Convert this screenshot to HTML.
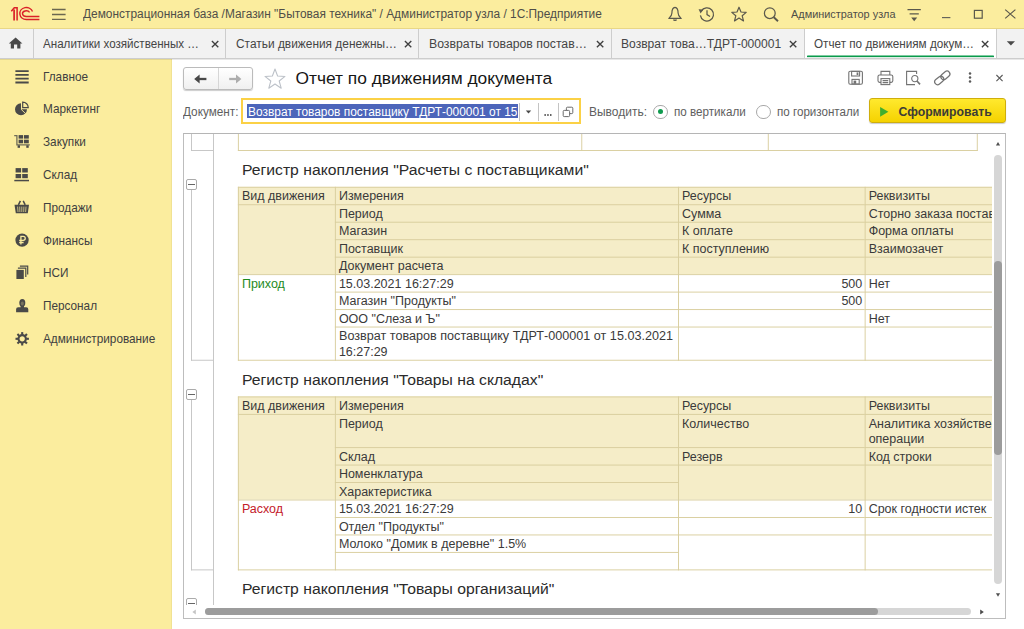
<!DOCTYPE html>
<html lang="ru"><head><meta charset="utf-8"><title>Отчет по движениям документа</title>
<style>
html,body{margin:0;padding:0;}
body{width:1024px;height:629px;overflow:hidden;position:relative;background:#fff;font-family:"Liberation Sans", sans-serif;}
.b{position:absolute;display:block;}
.t{position:absolute;white-space:pre;display:block;transform-origin:0 0;}
#clip{position:absolute;left:184px;top:134px;width:808px;height:471px;overflow:hidden;}
</style></head><body>
<header id="titlebar">
<div class="b" style="left:0px;top:0px;width:1024px;height:29px;background:#FBED9E;"></div>
<div class="b" style="left:0px;top:28px;width:1024px;height:1px;background:#E9D786;"></div>
<svg class="b" style="left:9px;top:5px" width="34" height="18" viewBox="0 0 34 18"><g fill="none" stroke="#DA2128" stroke-linecap="butt" stroke-linejoin="miter">
<path d="M2.3 6.3 L5.3 2.8 H8.1 V15.5" stroke-width="1.5"/><path d="M5.1 4.6 V15.5" stroke-width="1.7"/>
<path d="M23.5 6.6 A6.5 6.0 0 1 0 17.3 14.5 L30.4 14.5" stroke-width="1.4"/>
<path d="M20.6 7.3 A3.8 2.85 0 1 0 17.3 11.55 L30.4 11.55" stroke-width="1.4"/>
</g></svg>
<svg class="b" style="left:51px;top:7px" width="16" height="14" viewBox="0 0 16 14"><g stroke="#6b674f" stroke-width="1.3"><path d="M1 2.5H14.6M1 7.5H14.6M1 12.3H14.6"/></g></svg>
<svg class="b" style="left:666px;top:5px" width="18" height="18" viewBox="0 0 18 18"><g fill="none" stroke="#5a584c" stroke-width="1.2" stroke-linejoin="round"><path d="M9 2.4 C6.6 2.8 5.9 5.4 5.9 8 C5.9 11 4.2 12.2 2.8 13.4 H15.2 C13.8 12.2 12.1 11 12.1 8 C12.1 5.4 11.4 2.8 9 2.4Z"/></g><path d="M7 14.4 H11 A2 1.6 0 0 1 7 14.4Z" fill="#5a584c"/></svg>
<svg class="b" style="left:697px;top:5px" width="19" height="18" viewBox="0 0 19 18"><g fill="none" stroke="#5a584c" stroke-width="1.25"><path d="M4.2 6.2 A6.6 6.6 0 1 1 3.4 10.4"/><path d="M10 5.2 V9.6 L13 11.6"/></g><path d="M1.6 4.2 L6.4 4.6 L3.6 8.6Z" fill="#5a584c"/></svg>
<svg class="b" style="left:730px;top:5px" width="18" height="18" viewBox="0 0 18 18"><path d="M9 2.2 L11 7 L16.2 7.4 L12.2 10.8 L13.5 15.9 L9 13.1 L4.5 15.9 L5.8 10.8 L1.8 7.4 L7 7Z" fill="none" stroke="#5a584c" stroke-width="1.2" stroke-linejoin="round"/></svg>
<svg class="b" style="left:762px;top:5px" width="18" height="18" viewBox="0 0 18 18"><g fill="none" stroke="#5a584c"><circle cx="7.8" cy="8.2" r="5.4" stroke-width="1.25"/><path d="M11.8 12.2 L16 16.2" stroke-width="1.9"/></g></svg>
<svg class="b" style="left:906px;top:7px" width="16" height="16" viewBox="0 0 16 16"><g stroke="#5a584c" stroke-width="1.2" fill="none"><path d="M1.5 2.6H14.8M3.6 6.8H12.8"/></g><path d="M5.2 10.6 H11.2 L8.2 14.2Z" fill="#5a584c"/></svg>
<svg class="b" style="left:940px;top:8px" width="14" height="14" viewBox="0 0 14 14"><path d="M2 9.6H10.4" stroke="#66645a" stroke-width="1.15"/></svg>
<svg class="b" style="left:972px;top:8px" width="14" height="14" viewBox="0 0 14 14"><rect x="2.4" y="2.4" width="7.8" height="7.8" fill="none" stroke="#5a584c" stroke-width="1.2"/></svg>
<svg class="b" style="left:1003px;top:7px" width="16" height="16" viewBox="0 0 16 16"><path d="M2.2 2.6 L12.4 11.4 M12.4 2.6 L2.2 11.4" stroke="#5a584c" stroke-width="1.2"/></svg>
<span class="t" style="left:83.00px;top:5.74px;font-size:12.30px;line-height:16px;color:#4f4e48;transform:scaleX(0.9672);">Демонстрационная база /Магазин "Бытовая техника" / Администратор узла / 1С:Предприятие</span>
<span class="t" style="left:790.50px;top:6.48px;font-size:11.60px;line-height:15px;color:#4f4e48;transform:scaleX(0.9404);">Администратор узла</span>
</header>
<nav id="tabs">
<div class="b" style="left:0px;top:29px;width:1024px;height:30px;background:#F2F2F2;"></div>
<div class="b" style="left:805px;top:29px;width:191px;height:30px;background:#FFFFFF;"></div>
<div class="b" style="left:0px;top:58px;width:1024px;height:1px;background:#CDCDCD;"></div>
<div class="b" style="left:33px;top:29px;width:1px;height:30px;background:#CDCDCD;"></div>
<div class="b" style="left:225px;top:29px;width:1px;height:30px;background:#CDCDCD;"></div>
<div class="b" style="left:418px;top:29px;width:1px;height:30px;background:#CDCDCD;"></div>
<div class="b" style="left:611px;top:29px;width:1px;height:30px;background:#CDCDCD;"></div>
<div class="b" style="left:804px;top:29px;width:1px;height:30px;background:#CDCDCD;"></div>
<div class="b" style="left:996px;top:29px;width:1px;height:30px;background:#CDCDCD;"></div>
<div class="b" style="left:807px;top:55px;width:187px;height:1px;background:#7FCBA1;border-radius:1px 1px 0 0;"></div>
<div class="b" style="left:807px;top:56px;width:187px;height:1px;background:#0A9A4C;"></div>
<div class="b" style="left:807px;top:57px;width:187px;height:1px;background:#DDEFE5;"></div>
<svg class="b" style="left:8px;top:36px" width="16" height="14" viewBox="0 0 16 14"><path d="M7.6 1.4 L14.4 7.4 H12.4 V12.4 H9.2 V8.6 H6 V12.4 H2.8 V7.4 H0.8Z" fill="#4a4a4a"/></svg>
<svg class="b" style="left:210px;top:38.5px" width="10" height="10" viewBox="0 0 10 10"><path d="M1.9 1.9 L8.3 8.3 M8.3 1.9 L1.9 8.3" stroke="#404040" stroke-width="1.35"/></svg>
<svg class="b" style="left:403px;top:38.5px" width="10" height="10" viewBox="0 0 10 10"><path d="M1.9 1.9 L8.3 8.3 M8.3 1.9 L1.9 8.3" stroke="#404040" stroke-width="1.35"/></svg>
<svg class="b" style="left:595px;top:38.5px" width="10" height="10" viewBox="0 0 10 10"><path d="M1.9 1.9 L8.3 8.3 M8.3 1.9 L1.9 8.3" stroke="#404040" stroke-width="1.35"/></svg>
<svg class="b" style="left:788px;top:38.5px" width="10" height="10" viewBox="0 0 10 10"><path d="M1.9 1.9 L8.3 8.3 M8.3 1.9 L1.9 8.3" stroke="#404040" stroke-width="1.35"/></svg>
<svg class="b" style="left:980px;top:38.5px" width="10" height="10" viewBox="0 0 10 10"><path d="M1.9 1.9 L8.3 8.3 M8.3 1.9 L1.9 8.3" stroke="#404040" stroke-width="1.35"/></svg>
<svg class="b" style="left:1005px;top:40px" width="12" height="8" viewBox="0 0 12 8"><path d="M1.8 1.2 H10 L5.9 5.6Z" fill="#4a4a4a"/></svg>
<span class="t" style="left:43.00px;top:35.74px;font-size:12.30px;line-height:16px;color:#454545;transform:scaleX(0.9440);">Аналитики хозяйственных …</span>
<span class="t" style="left:236.00px;top:35.74px;font-size:12.30px;line-height:16px;color:#454545;transform:scaleX(0.9679);">Статьи движения денежны…</span>
<span class="t" style="left:429.00px;top:35.74px;font-size:12.30px;line-height:16px;color:#454545;transform:scaleX(0.9974);">Возвраты товаров постав…</span>
<span class="t" style="left:620.75px;top:35.74px;font-size:12.30px;line-height:16px;color:#454545;transform:scaleX(0.9822);">Возврат това…ТДРТ-000001</span>
<span class="t" style="left:813.75px;top:35.74px;font-size:12.30px;line-height:16px;color:#454545;transform:scaleX(0.9515);">Отчет по движениям докум…</span>
</nav>
<aside id="sections">
<div class="b" style="left:0px;top:59px;width:172px;height:570px;background:#FBED9E;"></div>
<div class="b" style="left:171px;top:59px;width:1px;height:570px;background:#F1E293;"></div>
<svg class="b" style="left:14px;top:67.5px" width="18" height="18" viewBox="0 0 18 18"><g stroke="#4a4a48" stroke-width="1.8"><path d="M1.4 3.1H14.7M1.4 6.85H14.7M1.4 10.6H14.7M1.4 14.5H14.7"/></g></svg>
<svg class="b" style="left:14px;top:100.28px" width="18" height="18" viewBox="0 0 18 18"><path d="M7 9.2 V3.2 A6 6 0 1 0 13 9.2Z" fill="#4a4a48"/><path d="M7 9.2 L11.6 13.6" stroke="#FBED9E" stroke-width="0.9"/><path d="M8.7 7.7 V2.1 A5.6 5.6 0 0 1 14.3 7.7Z" fill="none" stroke="#4a4a48" stroke-width="1.2"/></svg>
<svg class="b" style="left:14px;top:133.06px" width="18" height="18" viewBox="0 0 18 18"><path d="M0.2 2.6 H2.9 V11.8 H15.8" fill="none" stroke="#6f6c58" stroke-width="1.3"/><g fill="#4a4a48"><rect x="4.6" y="2.1" width="4.5" height="3.5"/><rect x="10" y="2.1" width="4.8" height="3.5"/><rect x="4.6" y="6.7" width="4.5" height="3.6"/><rect x="10" y="6.7" width="4.8" height="3.6"/><rect x="3.6" y="12.3" width="2.4" height="2.5"/><rect x="12.3" y="12.3" width="2.4" height="2.5"/></g></svg>
<svg class="b" style="left:14px;top:165.84px" width="18" height="18" viewBox="0 0 18 18"><g fill="#4a4a48"><rect x="1.6" y="2.1" width="5.5" height="4.4"/><rect x="8.2" y="2.1" width="5.6" height="4.4"/><rect x="1.6" y="8" width="5.5" height="4.2"/><rect x="8.2" y="8" width="5.6" height="4.2"/><rect x="0.3" y="13.8" width="14.7" height="1.5"/></g></svg>
<svg class="b" style="left:14px;top:198.62px" width="18" height="18" viewBox="0 0 18 18"><path d="M0.5 5.7 H15 L13.8 14.3 H1.8Z" fill="#4a4a48"/><path d="M4.4 5.9 L6.4 1.9 M9.2 1.9 L11.2 5.9" fill="none" stroke="#4a4a48" stroke-width="1.5"/><g stroke="#FBED9E" stroke-width="0.8" opacity="0.85"><path d="M3.6 7.6 L4 13 M5.7 7.6 L5.9 13 M7.8 7.6 V13 M9.9 7.6 L9.7 13 M12 7.6 L11.6 13"/></g></svg>
<svg class="b" style="left:14px;top:231.4px" width="18" height="18" viewBox="0 0 18 18"><circle cx="8.05" cy="9.1" r="6.65" fill="#4a4a48"/><g fill="none" stroke="#FBED9E" stroke-width="1.3"><path d="M6.9 13.4 V5.3 H9.2 A2.05 2.05 0 0 1 9.2 9.4 H5.2 M5.2 11.5 H9.6"/></g></svg>
<svg class="b" style="left:14px;top:264.18px" width="18" height="18" viewBox="0 0 18 18"><rect x="2.4" y="5.9" width="7.4" height="9.1" fill="#4a4a48"/><g fill="none" stroke="#4a4a48" stroke-width="1.2"><path d="M3.9 4.2 H11.8 V13"/><path d="M5.9 2.2 H13.7 V10.6"/></g></svg>
<svg class="b" style="left:14px;top:296.96px" width="18" height="18" viewBox="0 0 18 18"><g fill="#4a4a48"><ellipse cx="8.3" cy="5.8" rx="3" ry="3.9"/><path d="M6.6 8.6 H10 V10.2 H12.2 A2.1 2.1 0 0 1 14.3 12.3 V15.2 H2.1 V12.3 A2.1 2.1 0 0 1 4.2 10.2 H6.6Z"/></g><ellipse cx="8.3" cy="6.6" rx="1.5" ry="2" fill="#77745f"/></svg>
<svg class="b" style="left:14px;top:329.74px" width="18" height="18" viewBox="0 0 18 18"><g transform="translate(8.2 8.8)"><circle r="3.7" fill="none" stroke="#4a4a48" stroke-width="2.1"/><rect x="-1.05" y="-6.7" width="2.1" height="2.6" fill="#4a4a48" transform="rotate(0)"/><rect x="-1.05" y="-6.7" width="2.1" height="2.6" fill="#4a4a48" transform="rotate(45)"/><rect x="-1.05" y="-6.7" width="2.1" height="2.6" fill="#4a4a48" transform="rotate(90)"/><rect x="-1.05" y="-6.7" width="2.1" height="2.6" fill="#4a4a48" transform="rotate(135)"/><rect x="-1.05" y="-6.7" width="2.1" height="2.6" fill="#4a4a48" transform="rotate(180)"/><rect x="-1.05" y="-6.7" width="2.1" height="2.6" fill="#4a4a48" transform="rotate(225)"/><rect x="-1.05" y="-6.7" width="2.1" height="2.6" fill="#4a4a48" transform="rotate(270)"/><rect x="-1.05" y="-6.7" width="2.1" height="2.6" fill="#4a4a48" transform="rotate(315)"/></g></svg>
<span class="t" style="left:42.50px;top:68.70px;font-size:12.40px;line-height:16px;color:#404040;transform:scaleX(0.9500);">Главное</span>
<span class="t" style="left:42.50px;top:101.48px;font-size:12.40px;line-height:16px;color:#404040;transform:scaleX(0.9500);">Маркетинг</span>
<span class="t" style="left:42.50px;top:134.26px;font-size:12.40px;line-height:16px;color:#404040;transform:scaleX(0.9500);">Закупки</span>
<span class="t" style="left:42.50px;top:167.04px;font-size:12.40px;line-height:16px;color:#404040;transform:scaleX(0.9500);">Склад</span>
<span class="t" style="left:42.50px;top:199.82px;font-size:12.40px;line-height:16px;color:#404040;transform:scaleX(0.9500);">Продажи</span>
<span class="t" style="left:42.50px;top:232.60px;font-size:12.40px;line-height:16px;color:#404040;transform:scaleX(0.9500);">Финансы</span>
<span class="t" style="left:42.50px;top:265.38px;font-size:12.40px;line-height:16px;color:#404040;transform:scaleX(0.9500);">НСИ</span>
<span class="t" style="left:42.50px;top:298.16px;font-size:12.40px;line-height:16px;color:#404040;transform:scaleX(0.9500);">Персонал</span>
<span class="t" style="left:42.50px;top:330.94px;font-size:12.40px;line-height:16px;color:#404040;transform:scaleX(0.9500);">Администрирование</span>
</aside>
<main id="form">
<section id="form-header">
<div class="b" style="left:172px;top:59px;width:852px;height:570px;background:#FFFFFF;"></div>
<div class="b" style="left:0px;top:59px;width:1024px;height:1px;background:rgba(0,0,0,0.09);"></div>
<div class="b" style="left:183px;top:67px;width:70px;height:23px;border:1px solid #BBBBBB;border-radius:3px;background:linear-gradient(#FFFFFF,#F0F0F0);box-sizing:border-box;box-shadow:0 1px 1px rgba(0,0,0,.2)"></div>
<div class="b" style="left:218px;top:68px;width:1px;height:21px;background:#D6D6D6;"></div>
<svg class="b" style="left:193px;top:72.6px" width="16" height="12" viewBox="0 0 16 12"><path d="M3 6 H13.4" stroke="#484848" stroke-width="2.3"/><path d="M1.2 6 L6.6 1.4 V10.6Z" fill="#484848"/></svg>
<svg class="b" style="left:227px;top:72.6px" width="16" height="12" viewBox="0 0 16 12"><path d="M2.2 6 H12.6" stroke="#ADADAD" stroke-width="2.3"/><path d="M14.4 6 L9 1.4 V10.6Z" fill="#ADADAD"/></svg>
<svg class="b" style="left:263px;top:67px" width="24" height="24" viewBox="0 0 24 24"><path d="M12 2 L14.6 9 L22 9.4 L16.2 14 L18.2 21.2 L12 17 L5.8 21.2 L7.8 14 L2 9.4 L9.4 9Z" fill="none" stroke="#BCC1C8" stroke-width="1.05" stroke-linejoin="round"/></svg>
<svg class="b" style="left:847px;top:69px" width="18" height="18" viewBox="0 0 18 18"><g fill="none" stroke="#737373" stroke-width="1.1"><rect x="1.8" y="2.2" width="13.6" height="13" rx="1.4"/><rect x="4.6" y="2.4" width="8" height="4.6"/><rect x="5" y="10.4" width="7.2" height="4.6"/></g><rect x="9.6" y="3.4" width="1.8" height="2.6" fill="#737373"/><rect x="6.6" y="11.6" width="2.6" height="3.2" fill="#737373"/></svg>
<svg class="b" style="left:876px;top:69px" width="19" height="18" viewBox="0 0 19 18"><g fill="none" stroke="#737373" stroke-width="1.1"><path d="M5 6 V2.4 H13.8 V6"/><rect x="2" y="6" width="14.8" height="7.4" rx="1.6"/><rect x="5" y="9.6" width="8.8" height="6" fill="#fff"/><path d="M6.6 11.6H12.2M6.6 13.6H12.2"/></g></svg>
<svg class="b" style="left:905px;top:69px" width="17" height="18" viewBox="0 0 17 18"><g fill="none" stroke="#737373" stroke-width="1.1"><path d="M10 15.6 H1.6 V2.4 H11.6 V5"/><circle cx="9.8" cy="9.6" r="3.1"/><path d="M12 12 L15 15.4" stroke-width="1.6"/></g></svg>
<svg class="b" style="left:933px;top:69px" width="19" height="18" viewBox="0 0 19 18"><g transform="translate(9.3 8.9) rotate(-40)" fill="none" stroke="#737373" stroke-width="1.25"><rect x="-9" y="-2.9" width="10" height="5.8" rx="2.9"/><rect x="-1" y="-2.9" width="10" height="5.8" rx="2.9"/></g></svg>
<svg class="b" style="left:966px;top:70px" width="8" height="16" viewBox="0 0 8 16"><g fill="#5a5a5a"><circle cx="4" cy="3.6" r="1.25"/><circle cx="4" cy="7.6" r="1.25"/><circle cx="4" cy="11.6" r="1.25"/></g></svg>
<svg class="b" style="left:994px;top:72px" width="12" height="12" viewBox="0 0 12 12"><path d="M2.4 3 L8.6 9.2 M8.6 3 L2.4 9.2" stroke="#5a5a5a" stroke-width="1.1"/></svg>
<span class="t" style="left:295.50px;top:66.98px;font-size:17.38px;line-height:23px;color:#161616;">Отчет по движениям документа</span>
</section>
<section id="form-toolbar">
<div class="b" style="left:241px;top:98px;width:339.5px;height:26px;border:2px solid #FBD146;box-sizing:border-box;background:#fff"></div>
<div class="b" style="left:246.5px;top:104px;width:271.5px;height:13.6px;background:#4C65BA;"></div>
<div class="b" style="left:519px;top:102.5px;width:1px;height:18px;background:#C4C4C4;"></div>
<div class="b" style="left:538px;top:102.5px;width:1px;height:18px;background:#C4C4C4;"></div>
<div class="b" style="left:558px;top:102.5px;width:1px;height:18px;background:#C4C4C4;"></div>
<svg class="b" style="left:524px;top:108px" width="9" height="8" viewBox="0 0 9 8"><path d="M1.8 2.4 H7.2 L4.5 5.6Z" fill="#4a4a4a"/></svg>
<svg class="b" style="left:543px;top:112px" width="10" height="6" viewBox="0 0 10 6"><g fill="#3c3c3c"><rect x="1.4" y="2.2" width="1.5" height="1.6"/><rect x="4.2" y="2.2" width="1.5" height="1.6"/><rect x="7" y="2.2" width="1.5" height="1.6"/></g></svg>
<svg class="b" style="left:562px;top:106px" width="12" height="12" viewBox="0 0 12 12"><g fill="none" stroke="#6a6a6a" stroke-width="1"><rect x="1.2" y="4.4" width="6.4" height="6.2" rx="1"/><path d="M4.4 4 V2.2 A1 1 0 0 1 5.4 1.2 H9.8 A1 1 0 0 1 10.8 2.2 V6.6 A1 1 0 0 1 9.8 7.6 H8"/></g></svg>
<div class="b" style="left:653px;top:104.5px;width:14.5px;height:14.5px;border:1px solid #A8A8A8;border-radius:50%;box-sizing:border-box;background:#fff"></div>
<div class="b" style="left:657.6px;top:109.1px;width:5.3px;height:5.3px;border-radius:50%;background:#0F9B4E"></div>
<div class="b" style="left:756px;top:104.5px;width:14.5px;height:14.5px;border:1px solid #A8A8A8;border-radius:50%;box-sizing:border-box;background:#fff"></div>
<div class="b" style="left:869px;top:98px;width:136.5px;height:25px;border:1px solid #CFAE0C;border-radius:3px;box-sizing:border-box;background:linear-gradient(#FFE92E,#F5D200);box-shadow:0 1px 1px rgba(0,0,0,.2)"></div>
<svg class="b" style="left:879px;top:106px" width="11" height="12" viewBox="0 0 11 12"><path d="M1.1 0.9 L9.4 5.8 L1.1 10.7Z" fill="#41AE2E"/></svg>
<span class="t" style="left:183.00px;top:103.74px;font-size:12.30px;line-height:16px;color:#5e5e5e;transform:scaleX(0.9572);">Документ:</span>
<span class="t" style="left:247.50px;top:103.74px;font-size:12.30px;line-height:16px;color:#FFFFFF;transform:scaleX(0.9701);overflow:hidden;">Возврат товаров поставщику ТДРТ-000001 от 15</span>
<span class="t" style="left:589.00px;top:103.74px;font-size:12.30px;line-height:16px;color:#5e5e5e;transform:scaleX(0.9745);">Выводить:</span>
<span class="t" style="left:674.00px;top:103.74px;font-size:12.30px;line-height:16px;color:#5e5e5e;transform:scaleX(0.9469);">по вертикали</span>
<span class="t" style="left:776.75px;top:103.74px;font-size:12.30px;line-height:16px;color:#5e5e5e;transform:scaleX(0.9432);">по горизонтали</span>
<span class="t" style="left:898.50px;top:103.76px;font-size:12.24px;line-height:16px;color:#3c3b36;font-weight:bold;">Сформировать</span>
</section>
<section id="report">
<div class="b" style="left:183px;top:133px;width:823px;height:486px;background:#FFFFFF;border:1px solid #BDBDBD;box-sizing:border-box;border-top-color:#B5B5B5;"></div>

<div id="clip">
<svg class="b" style="left:0;top:0" width="808" height="471" shape-rendering="geometricPrecision"><rect x="29.00" y="-1.00" width="0.95" height="473.95" fill="#C4C4C4"/><rect x="7.00" y="-1.00" width="0.95" height="17.95" fill="#C4C4C4"/><rect x="7.00" y="16.00" width="22.00" height="0.95" fill="#C4C4C4"/><rect x="7.00" y="55.20" width="0.95" height="171.51" fill="#C4C4C4"/><rect x="7.00" y="225.76" width="22.00" height="0.95" fill="#C4C4C4"/><rect x="7.00" y="264.85" width="0.95" height="171.51" fill="#C4C4C4"/><rect x="7.00" y="435.41" width="22.00" height="0.95" fill="#C4C4C4"/><rect x="7.00" y="474.50" width="0.95" height="292.45" fill="#C4C4C4"/><rect x="7.00" y="766.00" width="22.00" height="0.95" fill="#C4C4C4"/><rect x="53.90" y="-1.00" width="0.95" height="17.95" fill="#D9CE9E"/><rect x="397.30" y="-1.00" width="0.95" height="17.95" fill="#D9CE9E"/><rect x="583.80" y="-1.00" width="0.95" height="17.95" fill="#D9CE9E"/><rect x="792.80" y="-1.00" width="0.95" height="17.95" fill="#D9CE9E"/><rect x="53.90" y="16.00" width="739.85" height="0.95" fill="#D9CE9E"/><rect x="53.90" y="52.80" width="862.10" height="87.35" fill="#F5EDC8"/><rect x="53.90" y="52.80" width="0.95" height="173.91" fill="#D9CE9E"/><rect x="150.90" y="52.80" width="0.95" height="173.91" fill="#D9CE9E"/><rect x="494.00" y="52.80" width="0.95" height="173.91" fill="#D9CE9E"/><rect x="680.65" y="52.80" width="0.95" height="173.91" fill="#D9CE9E"/><rect x="53.90" y="52.80" width="862.10" height="0.95" fill="#D9CE9E"/><rect x="53.90" y="225.76" width="862.10" height="0.95" fill="#D9CE9E"/><rect x="53.90" y="140.15" width="862.10" height="0.95" fill="#D9CE9E"/><rect x="53.90" y="70.27" width="97.00" height="0.95" fill="#D9CE9E"/><rect x="150.90" y="70.27" width="343.10" height="0.95" fill="#D9CE9E"/><rect x="150.90" y="87.74" width="343.10" height="0.95" fill="#D9CE9E"/><rect x="150.90" y="105.21" width="343.10" height="0.95" fill="#D9CE9E"/><rect x="150.90" y="122.68" width="343.10" height="0.95" fill="#D9CE9E"/><rect x="150.90" y="157.62" width="343.10" height="0.95" fill="#D9CE9E"/><rect x="150.90" y="175.09" width="343.10" height="0.95" fill="#D9CE9E"/><rect x="150.90" y="192.56" width="343.10" height="0.95" fill="#D9CE9E"/><rect x="494.00" y="70.27" width="186.65" height="0.95" fill="#D9CE9E"/><rect x="494.00" y="87.74" width="186.65" height="0.95" fill="#D9CE9E"/><rect x="494.00" y="105.21" width="186.65" height="0.95" fill="#D9CE9E"/><rect x="494.00" y="122.68" width="186.65" height="0.95" fill="#D9CE9E"/><rect x="494.00" y="157.62" width="186.65" height="0.95" fill="#D9CE9E"/><rect x="494.00" y="175.09" width="186.65" height="0.95" fill="#D9CE9E"/><rect x="494.00" y="192.56" width="186.65" height="0.95" fill="#D9CE9E"/><rect x="680.65" y="70.27" width="235.35" height="0.95" fill="#D9CE9E"/><rect x="680.65" y="87.74" width="235.35" height="0.95" fill="#D9CE9E"/><rect x="680.65" y="105.21" width="235.35" height="0.95" fill="#D9CE9E"/><rect x="680.65" y="122.68" width="235.35" height="0.95" fill="#D9CE9E"/><rect x="680.65" y="157.62" width="235.35" height="0.95" fill="#D9CE9E"/><rect x="680.65" y="175.09" width="235.35" height="0.95" fill="#D9CE9E"/><rect x="680.65" y="192.56" width="235.35" height="0.95" fill="#D9CE9E"/><rect x="53.90" y="262.45" width="862.10" height="103.08" fill="#F5EDC8"/><rect x="53.90" y="262.45" width="0.95" height="173.91" fill="#D9CE9E"/><rect x="150.90" y="262.45" width="0.95" height="173.91" fill="#D9CE9E"/><rect x="494.00" y="262.45" width="0.95" height="173.91" fill="#D9CE9E"/><rect x="680.65" y="262.45" width="0.95" height="173.91" fill="#D9CE9E"/><rect x="53.90" y="262.45" width="862.10" height="0.95" fill="#D9CE9E"/><rect x="53.90" y="435.41" width="862.10" height="0.95" fill="#D9CE9E"/><rect x="53.90" y="365.53" width="862.10" height="0.95" fill="#D9CE9E"/><rect x="53.90" y="279.92" width="97.00" height="0.95" fill="#D9CE9E"/><rect x="150.90" y="279.92" width="343.10" height="0.95" fill="#D9CE9E"/><rect x="150.90" y="313.12" width="343.10" height="0.95" fill="#D9CE9E"/><rect x="150.90" y="330.59" width="343.10" height="0.95" fill="#D9CE9E"/><rect x="150.90" y="348.06" width="343.10" height="0.95" fill="#D9CE9E"/><rect x="150.90" y="383.00" width="343.10" height="0.95" fill="#D9CE9E"/><rect x="150.90" y="400.47" width="343.10" height="0.95" fill="#D9CE9E"/><rect x="150.90" y="417.94" width="343.10" height="0.95" fill="#D9CE9E"/><rect x="494.00" y="279.92" width="186.65" height="0.95" fill="#D9CE9E"/><rect x="494.00" y="313.12" width="186.65" height="0.95" fill="#D9CE9E"/><rect x="494.00" y="330.59" width="186.65" height="0.95" fill="#D9CE9E"/><rect x="494.00" y="383.00" width="186.65" height="0.95" fill="#D9CE9E"/><rect x="494.00" y="400.47" width="186.65" height="0.95" fill="#D9CE9E"/><rect x="680.65" y="279.92" width="235.35" height="0.95" fill="#D9CE9E"/><rect x="680.65" y="313.12" width="235.35" height="0.95" fill="#D9CE9E"/><rect x="680.65" y="330.59" width="235.35" height="0.95" fill="#D9CE9E"/><rect x="680.65" y="383.00" width="235.35" height="0.95" fill="#D9CE9E"/><rect x="680.65" y="400.47" width="235.35" height="0.95" fill="#D9CE9E"/><rect x="53.90" y="472.10" width="862.10" height="30.00" fill="#F5EDC8"/><rect x="53.90" y="472.10" width="862.10" height="0.95" fill="#D9CE9E"/><rect x="53.90" y="472.10" width="0.95" height="30.95" fill="#D9CE9E"/><rect x="150.90" y="472.10" width="0.95" height="30.95" fill="#D9CE9E"/><rect x="494.00" y="472.10" width="0.95" height="30.95" fill="#D9CE9E"/><rect x="680.65" y="472.10" width="0.95" height="30.95" fill="#D9CE9E"/></svg>
<div class="b" style="left:2px;top:45px;width:11px;height:11px;border:1px solid #ABABAB;border-radius:2px;box-sizing:border-box;background:#fff"></div>
<div class="b" style="left:4px;top:50px;width:7px;height:1px;background:#666"></div>
<div class="b" style="left:2px;top:255px;width:11px;height:11px;border:1px solid #ABABAB;border-radius:2px;box-sizing:border-box;background:#fff"></div>
<div class="b" style="left:4px;top:260px;width:7px;height:1px;background:#666"></div>
<div class="b" style="left:2px;top:464px;width:11px;height:11px;border:1px solid #ABABAB;border-radius:2px;box-sizing:border-box;background:#fff"></div>
<div class="b" style="left:4px;top:469px;width:7px;height:1px;background:#666"></div>
<span class="t" style="left:57.90px;top:54.37px;font-size:12.50px;line-height:16px;color:#3a3a3a;">Вид движения</span>
<span class="t" style="left:154.90px;top:54.37px;font-size:12.50px;line-height:16px;color:#3a3a3a;">Измерения</span>
<span class="t" style="left:498.00px;top:54.37px;font-size:12.50px;line-height:16px;color:#3a3a3a;">Ресурсы</span>
<span class="t" style="left:684.65px;top:54.37px;font-size:12.50px;line-height:16px;color:#3a3a3a;">Реквизиты</span>
<span class="t" style="left:154.90px;top:71.84px;font-size:12.50px;line-height:16px;color:#3a3a3a;">Период</span>
<span class="t" style="left:498.00px;top:71.84px;font-size:12.50px;line-height:16px;color:#3a3a3a;">Сумма</span>
<span class="t" style="left:684.65px;top:71.84px;font-size:12.50px;line-height:16px;color:#3a3a3a;">Сторно заказа поставщику</span>
<span class="t" style="left:154.90px;top:89.31px;font-size:12.50px;line-height:16px;color:#3a3a3a;">Магазин</span>
<span class="t" style="left:498.00px;top:89.31px;font-size:12.50px;line-height:16px;color:#3a3a3a;">К оплате</span>
<span class="t" style="left:684.65px;top:89.31px;font-size:12.50px;line-height:16px;color:#3a3a3a;">Форма оплаты</span>
<span class="t" style="left:154.90px;top:106.78px;font-size:12.50px;line-height:16px;color:#3a3a3a;">Поставщик</span>
<span class="t" style="left:498.00px;top:106.78px;font-size:12.50px;line-height:16px;color:#3a3a3a;">К поступлению</span>
<span class="t" style="left:684.65px;top:106.78px;font-size:12.50px;line-height:16px;color:#3a3a3a;">Взаимозачет</span>
<span class="t" style="left:154.90px;top:124.25px;font-size:12.50px;line-height:16px;color:#3a3a3a;">Документ расчета</span>
<span class="t" style="left:57.90px;top:141.72px;font-size:12.50px;line-height:16px;color:#1E8A1E;">Приход</span>
<span class="t" style="left:154.90px;top:141.72px;font-size:12.50px;line-height:16px;color:#3a3a3a;">15.03.2021 16:27:29</span>
<span class="t" style="left:657.39px;top:141.72px;font-size:12.50px;line-height:16px;color:#3a3a3a;">500</span>
<span class="t" style="left:684.65px;top:141.72px;font-size:12.50px;line-height:16px;color:#3a3a3a;">Нет</span>
<span class="t" style="left:154.90px;top:159.19px;font-size:12.50px;line-height:16px;color:#3a3a3a;">Магазин "Продукты"</span>
<span class="t" style="left:657.39px;top:159.19px;font-size:12.50px;line-height:16px;color:#3a3a3a;">500</span>
<span class="t" style="left:154.90px;top:176.66px;font-size:12.50px;line-height:16px;color:#3a3a3a;">ООО "Слеза и Ъ"</span>
<span class="t" style="left:684.65px;top:176.66px;font-size:12.50px;line-height:16px;color:#3a3a3a;">Нет</span>
<span class="t" style="left:154.90px;top:194.13px;font-size:12.50px;line-height:16px;color:#3a3a3a;transform:scaleX(1.0091);">Возврат товаров поставщику ТДРТ-000001 от 15.03.2021</span>
<span class="t" style="left:154.90px;top:209.83px;font-size:12.50px;line-height:16px;color:#3a3a3a;">16:27:29</span>
<span class="t" style="left:57.60px;top:26.94px;font-size:14.90px;line-height:19px;color:#2b2b2b;transform:scaleX(1.0557);">Регистр накопления "Расчеты с поставщиками"</span>
<span class="t" style="left:57.90px;top:264.27px;font-size:12.50px;line-height:16px;color:#3a3a3a;">Вид движения</span>
<span class="t" style="left:154.90px;top:264.27px;font-size:12.50px;line-height:16px;color:#3a3a3a;">Измерения</span>
<span class="t" style="left:498.00px;top:264.27px;font-size:12.50px;line-height:16px;color:#3a3a3a;">Ресурсы</span>
<span class="t" style="left:684.65px;top:264.27px;font-size:12.50px;line-height:16px;color:#3a3a3a;">Реквизиты</span>
<span class="t" style="left:154.90px;top:281.74px;font-size:12.50px;line-height:16px;color:#3a3a3a;">Период</span>
<span class="t" style="left:498.00px;top:281.74px;font-size:12.50px;line-height:16px;color:#3a3a3a;">Количество</span>
<span class="t" style="left:684.65px;top:281.74px;font-size:12.50px;line-height:16px;color:#3a3a3a;">Аналитика хозяйственной</span>
<span class="t" style="left:684.65px;top:297.44px;font-size:12.50px;line-height:16px;color:#3a3a3a;">операции</span>
<span class="t" style="left:154.90px;top:314.94px;font-size:12.50px;line-height:16px;color:#3a3a3a;">Склад</span>
<span class="t" style="left:498.00px;top:314.94px;font-size:12.50px;line-height:16px;color:#3a3a3a;">Резерв</span>
<span class="t" style="left:684.65px;top:314.94px;font-size:12.50px;line-height:16px;color:#3a3a3a;">Код строки</span>
<span class="t" style="left:154.90px;top:332.41px;font-size:12.50px;line-height:16px;color:#3a3a3a;">Номенклатура</span>
<span class="t" style="left:154.90px;top:349.88px;font-size:12.50px;line-height:16px;color:#3a3a3a;">Характеристика</span>
<span class="t" style="left:57.90px;top:367.35px;font-size:12.50px;line-height:16px;color:#C4202A;">Расход</span>
<span class="t" style="left:154.90px;top:367.35px;font-size:12.50px;line-height:16px;color:#3a3a3a;">15.03.2021 16:27:29</span>
<span class="t" style="left:664.35px;top:367.35px;font-size:12.50px;line-height:16px;color:#3a3a3a;">10</span>
<span class="t" style="left:684.65px;top:367.35px;font-size:12.50px;line-height:16px;color:#3a3a3a;">Срок годности истек</span>
<span class="t" style="left:154.90px;top:384.82px;font-size:12.50px;line-height:16px;color:#3a3a3a;">Отдел "Продукты"</span>
<span class="t" style="left:154.90px;top:402.29px;font-size:12.50px;line-height:16px;color:#3a3a3a;">Молоко "Домик в деревне" 1.5%</span>
<span class="t" style="left:57.60px;top:236.89px;font-size:14.90px;line-height:19px;color:#2b2b2b;transform:scaleX(1.0557);">Регистр накопления "Товары на складах"</span>
<span class="t" style="left:57.60px;top:446.04px;font-size:14.90px;line-height:19px;color:#2b2b2b;transform:scaleX(1.0557);">Регистр накопления "Товары организаций"</span>
</div>
<div class="b" style="left:994.3px;top:155px;width:7.5px;height:428.7px;border-radius:4px;background:#D6D6D6"></div>
<div class="b" style="left:994.3px;top:261.4px;width:7.5px;height:193.2px;border-radius:4px;background:#9C9C9C"></div>
<svg class="b" style="left:994.4px;top:140px" width="8" height="8"><path d="M1.9 5.6 H6.1 L4 2.1Z" fill="#505050"/></svg>
<svg class="b" style="left:994.4px;top:590.7px" width="8" height="8"><path d="M1.9 2.2 H6.1 L4 5.7Z" fill="#505050"/></svg>
<div class="b" style="left:205px;top:608px;width:765.5px;height:7.2px;border-radius:4px;background:#D6D6D6"></div>
<div class="b" style="left:205px;top:608px;width:673px;height:7.2px;border-radius:4px;background:#9C9C9C"></div>
<svg class="b" style="left:190px;top:607.5px" width="8" height="8"><path d="M5.8 1.6 V6.4 L2.4 4Z" fill="#C4C4C4"/></svg>
<svg class="b" style="left:977.5px;top:607.5px" width="8" height="8"><path d="M2.2 1.6 V6.4 L5.8 4Z" fill="#4a4a4a"/></svg>
</section>
</main>
</body></html>
